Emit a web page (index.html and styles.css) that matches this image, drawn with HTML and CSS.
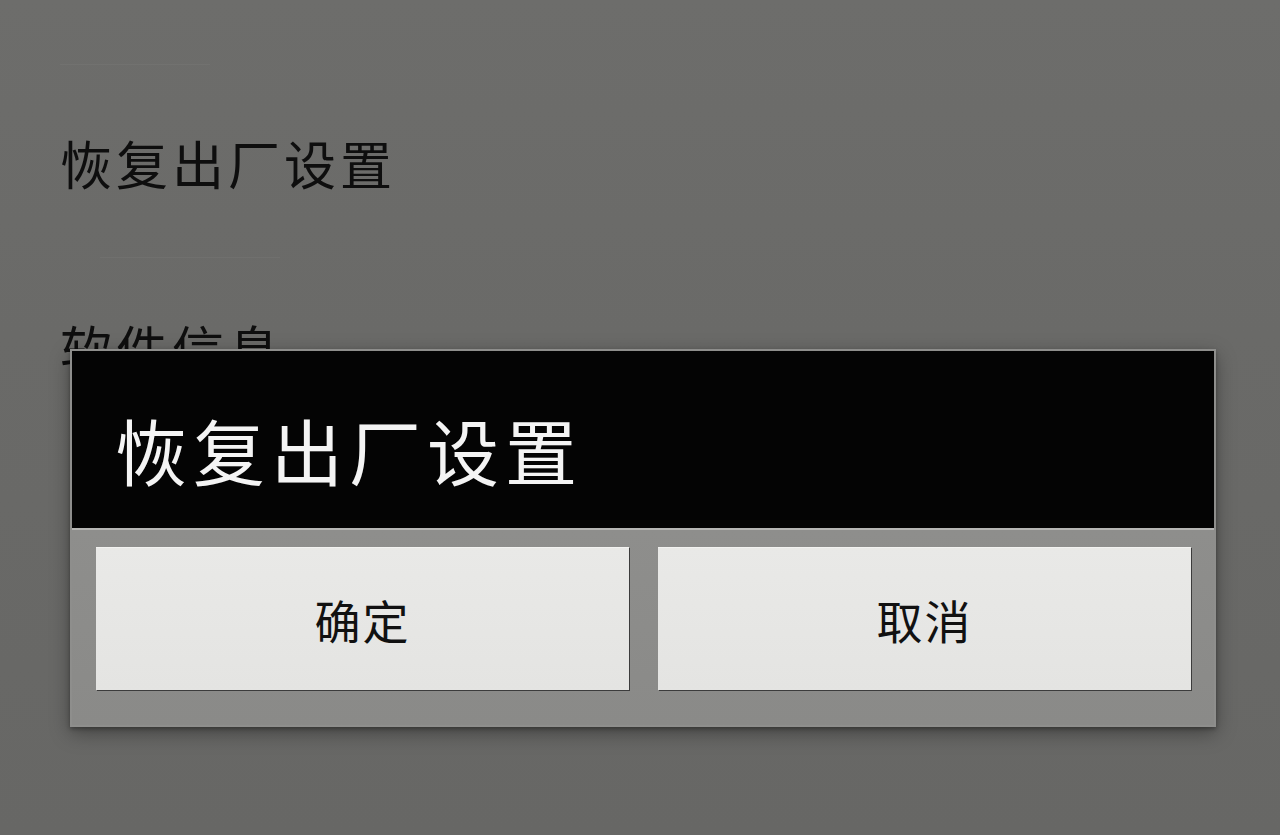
FILE: index.html
```html
<!DOCTYPE html>
<html lang="zh-CN">
<head>
<meta charset="utf-8">
<title>恢复出厂设置</title>
<link rel="stylesheet" href="styles.css">
</head>
<body>
<div class="screen">
  <div class="settings">
    <div class="divider divider-top"></div>
    <div class="item item-reset">恢复出厂设置</div>
    <div class="divider divider-mid"></div>
    <div class="item item-info">软件信息</div>
  </div>

  <div class="dialog">
    <div class="dialog-title">恢复出厂设置</div>
    <div class="dialog-actions">
      <div class="btn">确定</div>
      <div class="btn">取消</div>
    </div>
  </div>
</div>
</body>
</html>
```

FILE: styles.css
```css
html, body {
  margin: 0;
  padding: 0;
}

body {
  width: 1280px;
  height: 835px;
  overflow: hidden;
  background: #6a6a68;
  font-family: "Noto Sans CJK SC", "Noto Sans", sans-serif;
}

.screen {
  position: relative;
  width: 1280px;
  height: 835px;
  background: linear-gradient(180deg, #6d6d6b 0%, #6a6a68 40%, #676765 100%);
}

.settings {
  display: flex;
  flex-direction: column;
  padding: 64px 0 0 60px;
}

.divider {
  height: 1px;
  background: rgba(255, 255, 255, 0.035);
}

.divider-top {
  width: 150px;
}

.divider-mid {
  width: 180px;
  margin: 0 0 0 40px;
}

.item {
  font-size: 52px;
  line-height: 1;
  color: #0e0e0e;
  letter-spacing: 4px;
}

.item-reset {
  margin: 72px 0 68px 0;
}

.item-info {
  margin-top: 64px;
}

.dialog {
  position: absolute;
  left: 70px;
  top: 349px;
  width: 1142px;
  height: 374px;
  border: 2px solid #8e8e8c;
  background: #8b8b89;
  box-shadow: 0 6px 18px rgba(0, 0, 0, 0.35), 0 2px 4px rgba(0, 0, 0, 0.3);
  display: flex;
  flex-direction: column;
}

.dialog-title {
  height: 179px;
  background: #040404;
  color: #f4f4f4;
  font-size: 72px;
  line-height: 1;
  letter-spacing: 6px;
  display: flex;
  align-items: center;
  padding: 18px 0 0 43px;
  box-sizing: border-box;
  border-bottom: 2px solid #b6b6b4;
}

.dialog-actions {
  flex: 1;
  display: grid;
  grid-template-columns: 1fr 1fr;
  gap: 29px;
  padding: 17px 23px 35px 24px;
  background: linear-gradient(180deg, #8e8e8c 0%, #8a8a88 100%);
}

.btn {
  background: linear-gradient(180deg, #e9e9e7 0%, #e4e4e2 100%);
  box-shadow: 1px 1px 0 #3c3c3c, inset 0 1px 0 #f2f2f0;
  color: #111;
  font-size: 46px;
  line-height: 1;
  letter-spacing: 2px;
  display: flex;
  align-items: center;
  justify-content: center;
}
```
